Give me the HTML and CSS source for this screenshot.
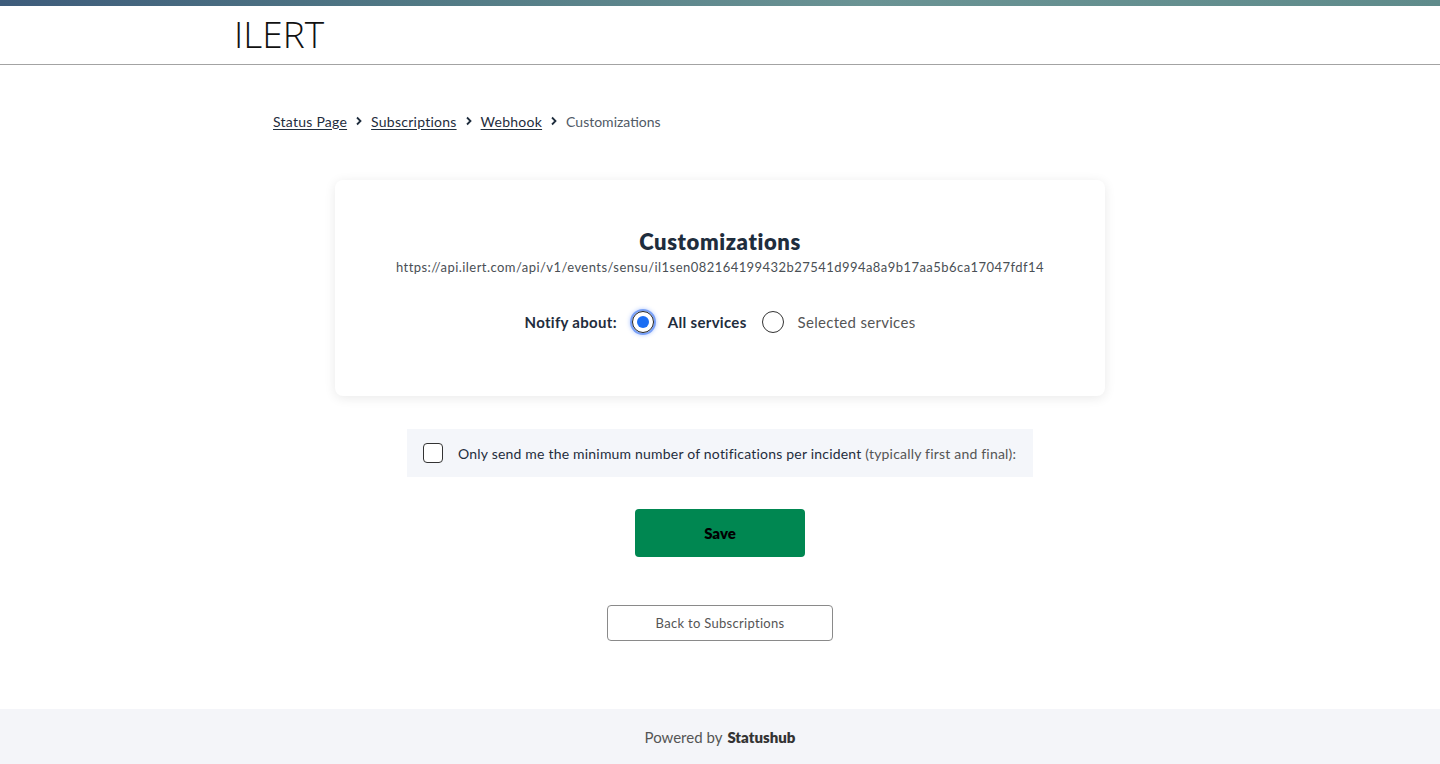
FILE: index.html
```html
<!DOCTYPE html>
<html>
<head>
<meta charset="utf-8">
<link rel="stylesheet" href="styles.css">
</head>
<body>
<div class="topbar"></div>
<header class="header">
  <div class="logo">ILERT</div>
</header>
<main class="main">
  <nav class="crumbs">
    <a href="#">Status Page</a>
    <svg class="chev" viewBox="0 0 10 10" width="10" height="10"><path d="M3 1.5 L6.5 5 L3 8.5" fill="none" stroke="#1f2d3d" stroke-width="1.8"/></svg>
    <a href="#">Subscriptions</a>
    <svg class="chev" viewBox="0 0 10 10" width="10" height="10"><path d="M3 1.5 L6.5 5 L3 8.5" fill="none" stroke="#1f2d3d" stroke-width="1.8"/></svg>
    <a href="#">Webhook</a>
    <svg class="chev" viewBox="0 0 10 10" width="10" height="10"><path d="M3 1.5 L6.5 5 L3 8.5" fill="none" stroke="#1f2d3d" stroke-width="1.8"/></svg>
    <span class="current">Customizations</span>
  </nav>
  <section class="card">
    <h1 class="title">Customizations</h1>
    <div class="url">https://api.ilert.com/api/v1/events/sensu/il1sen082164199432b27541d994a8a9b17aa5b6ca17047fdf14</div>
    <div class="notify">
      <span class="notify-label">Notify about:</span>
      <span class="radio checked"><span class="dot"></span></span>
      <span class="opt strong">All services</span>
      <span class="radio"></span>
      <span class="opt">Selected services</span>
    </div>
  </section>
  <div class="minbox">
    <span class="check"></span>
    <span class="mintext">Only send me the minimum number of notifications per incident <span class="muted">(typically first and final):</span></span>
  </div>
  <button class="save">Save</button>
  <button class="back">Back to Subscriptions</button>
</main>
<footer class="footer">Powered by <b>Statushub</b></footer>
</body>
</html>
```
FILE: styles.css
```css
* { box-sizing: border-box; }
html, body { margin: 0; padding: 0; }
body {
  font-family: Lato, "Open Sans", "Liberation Sans", sans-serif;
  color: #1f2d3d;
  background: #fff;
  height: 764px;
  display: flex;
  flex-direction: column;
}
.topbar {
  height: 6px;
  background: linear-gradient(90deg, #3e5c7b 0%, #527a85 30%, #6a9394 60%, #5f8b8b 100%);
}
.header {
  height: 59px;
  border-bottom: 1px solid #a3a3a3;
  padding-left: 234px;
  display: flex;
  align-items: center;
}
.logo {
  font-family: "Open Sans", Lato, sans-serif;
  font-weight: 300;
  font-size: 37px;
  letter-spacing: 0;
  color: #111;
  line-height: 1;
  margin-top: -3px;
}
.main {
  flex: 1;
  display: flex;
  flex-direction: column;
  align-items: center;
}
.crumbs {
  align-self: flex-start;
  margin-left: 273px;
  margin-top: 47px;
  display: flex;
  align-items: center;
  font-size: 14px;
  height: 18px;
  letter-spacing: 0.25px;
}
.crumbs a { color: #1f2d3d; text-decoration: underline; text-underline-offset: 2px; }
.chev { margin: 0 7px 0 7px; }
.current { color: #505a66; letter-spacing: 0; }
.card {
  margin-top: 50px;
  width: 770px;
  height: 216px;
  background: #fff;
  border-radius: 8px;
  box-shadow: 0 2px 12px rgba(0,0,0,0.09);
  display: flex;
  flex-direction: column;
  align-items: center;
  padding-top: 49px;
}
.title {
  margin: 0;
  font-size: 22px;
  font-weight: 800;
  color: #1f2d3d;
  line-height: 26px;
  letter-spacing: 0.6px;
}
.url {
  font-size: 13px;
  color: #4a4f55;
  margin-top: 4px;
  line-height: 16px;
  letter-spacing: 0.45px;
}
.notify {
  margin-top: 36px;
  display: flex;
  align-items: center;
  font-size: 15px;
  letter-spacing: 0.3px;
}
.notify-label { font-weight: 700; color: #1f2d3d; margin-right: 15px; }
.radio {
  width: 22px; height: 22px;
  border-radius: 50%;
  border: 1.5px solid #333;
  display: inline-flex;
  align-items: center;
  justify-content: center;
  margin-right: 14px;
}
.radio.checked {
  border-color: #222;
  box-shadow: 0 0 0 2px rgba(50,110,240,0.55), 0 0 4px 2px rgba(60,120,255,0.4);
}
.dot { width: 12px; height: 12px; border-radius: 50%; background: #1b6ef3; }
.opt { color: #555; }
.opt.strong { color: #1f2d3d; font-weight: 700; margin-right: 15px; }
.minbox {
  margin-top: 33px;
  width: 626px;
  height: 48px;
  background: #f4f6fa;
  display: flex;
  align-items: center;
  padding-left: 16px;
}
.check {
  width: 20px; height: 20px;
  border: 1.5px solid #333;
  border-radius: 4px;
  background: #fff;
  margin-right: 15px;
}
.mintext { font-size: 14px; color: #1f2d3d; letter-spacing: 0.2px; white-space: nowrap; }
.muted { color: #555; }
.save {
  margin-top: 32px;
  width: 170px;
  height: 48px;
  background: #008751;
  border: none;
  border-radius: 4px;
  font-family: inherit;
  font-weight: 800;
  font-size: 15px;
  color: #000;
}
.back {
  margin-top: 48px;
  width: 226px;
  height: 36px;
  background: #fff;
  border: 1px solid #8a8a8a;
  border-radius: 4px;
  font-family: inherit;
  font-size: 13px;
  letter-spacing: 0.3px;
  color: #555;
}
.footer {
  height: 55px;
  background: #f4f5f9;
  display: flex;
  align-items: center;
  justify-content: center;
  font-size: 15px;
  color: #555;
}
.footer b { color: #333; margin-left: 5px; font-weight: 800; }
```
